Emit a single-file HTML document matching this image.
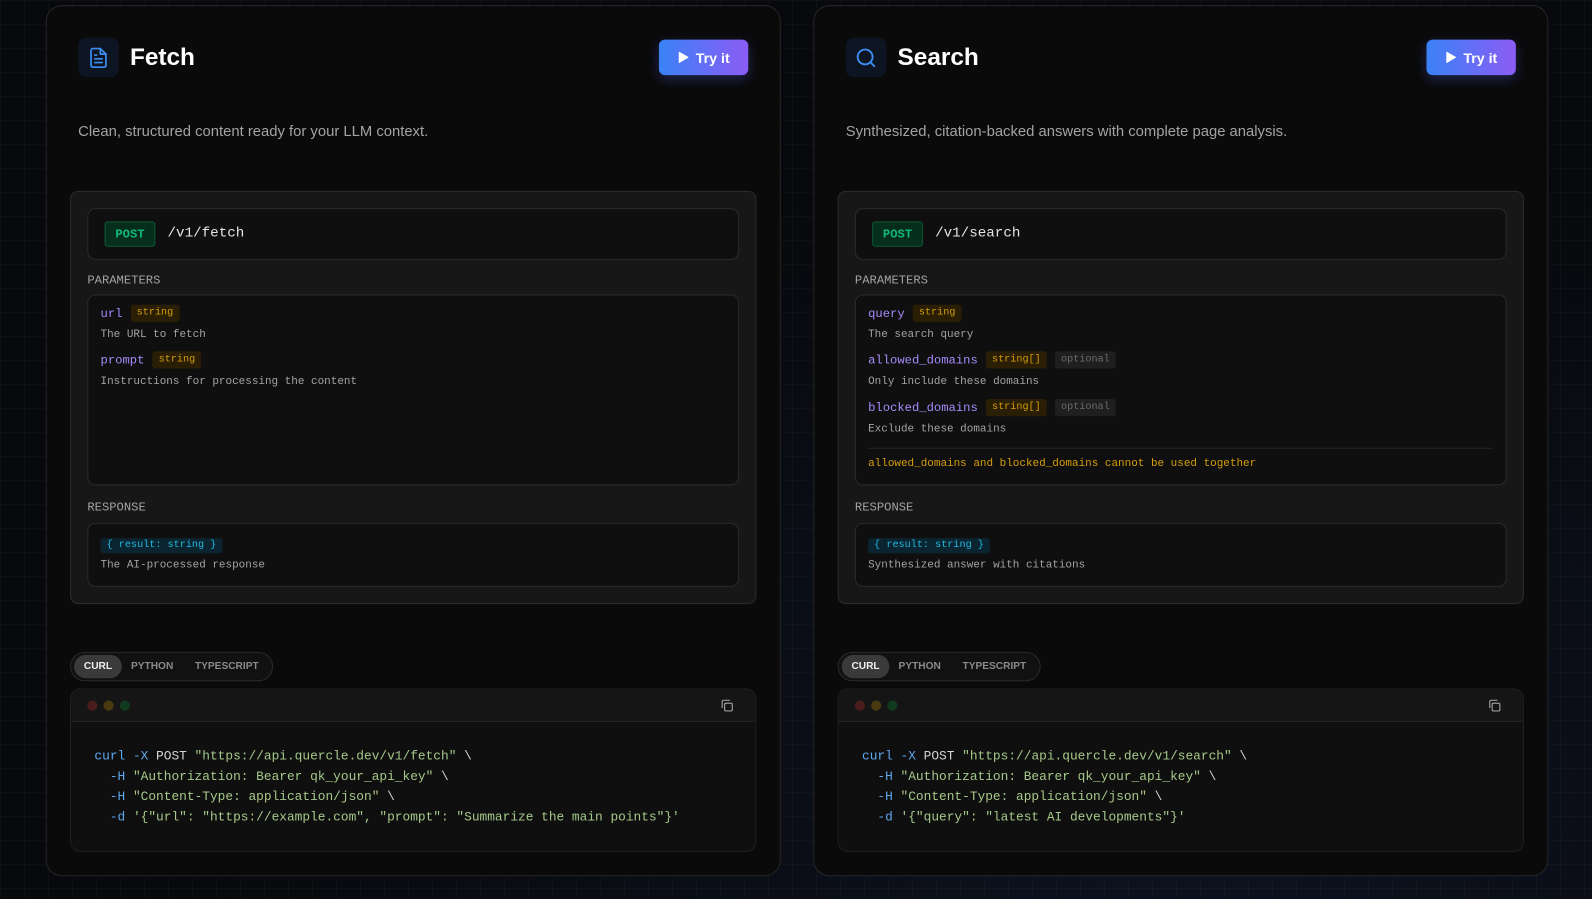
<!DOCTYPE html>
<html><head><meta charset="utf-8"><style>
*{box-sizing:border-box;margin:0;padding:0}
body{width:1592px;height:899px;overflow:hidden;background:#08090c;font-family:"Liberation Sans",sans-serif;position:relative;
background-image:linear-gradient(rgba(255,255,255,0.025) 1px,transparent 1px),linear-gradient(90deg,rgba(255,255,255,0.025) 1px,transparent 1px),radial-gradient(ellipse at 75% 90%,#0d1220 0%,#08090c 60%);
background-size:24px 24px,24px 24px,100% 100%}
#w{position:absolute;left:0;top:0;width:1568px;height:885px;transform:scale(1.0153);transform-origin:0 0}
.card{position:absolute;top:5px;width:724px;height:858px;background:#0a0a0a;border:1px solid #262626;border-radius:16px}
.ic{position:absolute;left:31px;top:31px;width:40px;height:39px;border-radius:8px;background:#0e1522;display:flex;align-items:center;justify-content:center}
.title{position:absolute;left:82px;top:37px;font-size:24px;font-weight:bold;color:#fff}
.btn{position:absolute;left:603px;top:33px;width:88px;height:35px;border-radius:6px;background:linear-gradient(90deg,#3b82f6,#8b5cf6);color:#fff;font-weight:bold;font-size:14px;display:flex;align-items:center;justify-content:center;gap:6px;box-shadow:0 4px 12px rgba(80,100,246,0.3)}
.desc{position:absolute;left:31px;top:116px;font-size:14.6px;color:#a3a3a3}
.panel{position:absolute;left:23px;top:182px;width:676px;height:407px;background:#171717;border:1px solid #2c2c2c;border-radius:8px}
.mono{font-family:"Liberation Mono",monospace}
.ep{position:absolute;left:16px;top:16px;width:642px;height:51px;background:#0f0f0f;border:1px solid #2a2a2a;border-radius:8px}
.post{position:absolute;left:16px;top:12px;width:50px;height:25px;background:#052e1c;border:1px solid #0b5a37;border-radius:3px;color:#10b981;font-size:12px;font-weight:bold;display:flex;align-items:center;justify-content:center}
.path{position:absolute;left:78px;top:16px;font-size:14px;color:#e5e5e5}
.lbl{position:absolute;left:16px;font-size:12px;color:#a3a3a3}
.box{position:absolute;left:16px;width:642px;background:#0f0f0f;border:1px solid #2a2a2a;border-radius:8px}
.row{position:absolute;left:12px;font-size:12px;color:#a78bfa;display:flex;align-items:center;gap:8px}
.t{background:#2a1f05;color:#d69e0c;font-size:10px;padding:3px 6px;border-radius:3px}
.o{background:#1f1f1f;color:#6b6b6b;font-size:10px;padding:3px 6px;border-radius:3px}
.d{position:absolute;left:12px;font-size:10.8px;color:#a3a3a3}
.res{position:absolute;left:12px;top:14px;background:#0b2530;color:#22b8e0;font-size:10px;padding:2px 6px;border-radius:3px}
.tabs{position:absolute;left:23px;top:636px;width:200px;height:29px;border:1px solid #2a2a2a;border-radius:15px;background:#111;font-size:10px;font-weight:bold;color:#8a8a8a}
.tabs span{position:absolute;top:8px}
.tabs .a{left:3px;top:2px;width:47px;height:23px;border-radius:12px;background:#3a3a3a;color:#eee;display:flex;align-items:center;justify-content:center}
.code{position:absolute;left:23px;top:672px;width:676px;height:161px;background:#0f0f0f;border:1px solid #1f1f1f;border-radius:10px;overflow:hidden}
.ch{height:32px;background:#151515;border-bottom:1px solid #262626;position:relative}
.dot{position:absolute;top:11px;width:10px;height:10px;border-radius:50%}
.pre{position:absolute;left:23px;top:56px;font-size:12.65px;line-height:20px;color:#d4d4d4;white-space:pre}
.k{color:#5ea8f0}.s{color:#a5c98a}
</style></head><body><div id="w">

<div class="card" style="left:45px">
 <div class="ic"><svg width="22" height="22" viewBox="0 0 24 24" fill="none" stroke="#3b8ff6" stroke-width="1.8" stroke-linecap="round" stroke-linejoin="round"><path d="M14 2H6a2 2 0 0 0-2 2v16a2 2 0 0 0 2 2h12a2 2 0 0 0 2-2V8z"/><path d="M14 2v6h6"/><path d="M8 13h8M8 17h8M8 9h2"/></svg></div>
 <div class="title">Fetch</div>
 <div class="btn"><svg width="12" height="13" viewBox="0 0 12 13"><path d="M2 1.5v10l8.5-5z" fill="#fff" stroke="#fff" stroke-linejoin="round"/></svg>Try it</div>
 <div class="desc">Clean, structured content ready for your LLM context.</div>
 <div class="panel">
  <div class="ep"><div class="post mono">POST</div><div class="path mono">/v1/fetch</div></div>
  <div class="lbl mono" style="top:80px">PARAMETERS</div>
  <div class="box" style="top:101px;height:188px">
   <div class="row mono" style="top:9px">url <span class="t">string</span></div>
   <div class="d mono" style="top:33px">The URL to fetch</div>
   <div class="row mono" style="top:55px">prompt <span class="t">string</span></div>
   <div class="d mono" style="top:79px">Instructions for processing the content</div>
  </div>
  <div class="lbl mono" style="top:304px">RESPONSE</div>
  <div class="box" style="top:326px;height:63px">
   <div class="res mono">{ result: string }</div>
   <div class="d mono" style="top:35px">The AI-processed response</div>
  </div>
 </div>
 <div class="tabs"><span class="a">CURL</span><span style="left:59px">PYTHON</span><span style="left:122px">TYPESCRIPT</span></div>
 <div class="code">
  <div class="ch"><div class="dot" style="left:16px;background:#4a1d1d"></div><div class="dot" style="left:32px;background:#4a3a10"></div><div class="dot" style="left:48px;background:#123a1f"></div>
  <svg style="position:absolute;left:639px;top:9px" width="14" height="14" viewBox="0 0 24 24" fill="none" stroke="#9a9a9a" stroke-width="2"><rect x="8" y="8" width="13" height="13" rx="2"/><path d="M4 16V5a2 2 0 0 1 2-2h11"/></svg></div>
  <div class="pre mono"><span class="k">curl</span> <span class="k">-X</span> POST <span class="s">"https://api.quercle.dev/v1/fetch"</span> \
  <span class="k">-H</span> <span class="s">"Authorization: Bearer qk_your_api_key"</span> \
  <span class="k">-H</span> <span class="s">"Content-Type: application/json"</span> \
  <span class="k">-d</span> <span class="s">'{"url": "https://example.com", "prompt": "Summarize the main points"}'</span></div>
 </div>
</div>

<div class="card" style="left:801px">
 <div class="ic"><svg width="22" height="22" viewBox="0 0 24 24" fill="none" stroke="#3b8ff6" stroke-width="2" stroke-linecap="round"><circle cx="11" cy="11" r="8"/><path d="M21 21l-4.3-4.3"/></svg></div>
 <div class="title">Search</div>
 <div class="btn"><svg width="12" height="13" viewBox="0 0 12 13"><path d="M2 1.5v10l8.5-5z" fill="#fff" stroke="#fff" stroke-linejoin="round"/></svg>Try it</div>
 <div class="desc">Synthesized, citation-backed answers with complete page analysis.</div>
 <div class="panel">
  <div class="ep"><div class="post mono">POST</div><div class="path mono">/v1/search</div></div>
  <div class="lbl mono" style="top:80px">PARAMETERS</div>
  <div class="box" style="top:101px;height:188px">
   <div class="row mono" style="top:9px">query <span class="t">string</span></div>
   <div class="d mono" style="top:33px">The search query</div>
   <div class="row mono" style="top:55px">allowed_domains <span class="t">string[]</span><span class="o">optional</span></div>
   <div class="d mono" style="top:79px">Only include these domains</div>
   <div class="row mono" style="top:102px">blocked_domains <span class="t">string[]</span><span class="o">optional</span></div>
   <div class="d mono" style="top:126px">Exclude these domains</div>
   <div style="position:absolute;left:12px;right:12px;top:150px;border-top:1px solid #262626"></div>
   <div class="d mono" style="top:160px;color:#d69e0c">allowed_domains and blocked_domains cannot be used together</div>
  </div>
  <div class="lbl mono" style="top:304px">RESPONSE</div>
  <div class="box" style="top:326px;height:63px">
   <div class="res mono">{ result: string }</div>
   <div class="d mono" style="top:35px">Synthesized answer with citations</div>
  </div>
 </div>
 <div class="tabs"><span class="a">CURL</span><span style="left:59px">PYTHON</span><span style="left:122px">TYPESCRIPT</span></div>
 <div class="code">
  <div class="ch"><div class="dot" style="left:16px;background:#4a1d1d"></div><div class="dot" style="left:32px;background:#4a3a10"></div><div class="dot" style="left:48px;background:#123a1f"></div>
  <svg style="position:absolute;left:639px;top:9px" width="14" height="14" viewBox="0 0 24 24" fill="none" stroke="#9a9a9a" stroke-width="2"><rect x="8" y="8" width="13" height="13" rx="2"/><path d="M4 16V5a2 2 0 0 1 2-2h11"/></svg></div>
  <div class="pre mono"><span class="k">curl</span> <span class="k">-X</span> POST <span class="s">"https://api.quercle.dev/v1/search"</span> \
  <span class="k">-H</span> <span class="s">"Authorization: Bearer qk_your_api_key"</span> \
  <span class="k">-H</span> <span class="s">"Content-Type: application/json"</span> \
  <span class="k">-d</span> <span class="s">'{"query": "latest AI developments"}'</span></div>
 </div>
</div>
</div></body></html>
